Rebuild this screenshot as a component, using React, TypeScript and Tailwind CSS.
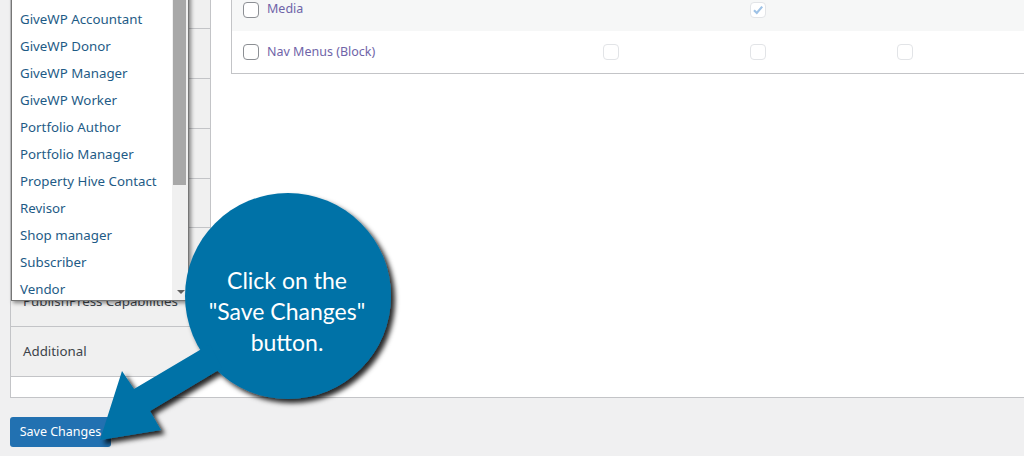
import React from "react";

const roles = [
  "Editor",
  "GiveWP Accountant",
  "GiveWP Donor",
  "GiveWP Manager",
  "GiveWP Worker",
  "Portfolio Author",
  "Portfolio Manager",
  "Property Hive Contact",
  "Revisor",
  "Shop manager",
  "Subscriber",
  "Vendor",
];

function Box({ checked = false, dark = false }: { checked?: boolean; dark?: boolean }) {
  return (
    <span
      className={
        "flex h-[16px] w-[16px] items-center justify-center rounded-[4px] border bg-white " +
        (dark ? "border-[#8c8f94]" : "border-[#e2e4e7]")
      }
    >
      {checked && (
        <svg width="12" height="12" viewBox="0 0 12 12">
          <path d="M2 6.2 L4.8 9 L10.2 2.6" fill="none" stroke="#9ec2e6" strokeWidth="2.2" />
        </svg>
      )}
    </span>
  );
}

export default function App() {
  return (
    <div
      className="relative h-[456px] w-[1024px] overflow-hidden bg-[#f0f0f1]"
      style={{ fontFamily: '"Noto Sans", "Open Sans", sans-serif' }}
    >
      {/* main panel */}
      <div className="ml-[10px] flex h-[398px] w-[1014px] border-b border-l border-[#c3c4c7] bg-white">
        {/* sidebar */}
        <div className="flex w-[200px] flex-col">
          <div className="flex flex-col border-r border-[#c3c4c7] bg-[#f0f0f0]">
            <div className="h-[29px] border-b border-[#c3c4c7]" />
            <div className="h-[50px] border-b border-[#c3c4c7]" />
            <div className="h-[50px] border-b border-[#c3c4c7]" />
            <div className="h-[50px] border-b border-[#c3c4c7]" />
            <div className="h-[49px] border-b border-[#c3c4c7]" />
            <div className="h-[49px] border-b border-[#c3c4c7]" />
            <div className="flex h-[50px] items-center border-b border-[#c3c4c7] pl-[12px] text-[13.3px] text-[#3c434a]">
              PublishPress Capabilities
            </div>
            <div className="flex h-[50px] items-center border-b border-[#c3c4c7] pl-[12px] text-[13.3px] text-[#3c434a]">
              Additional
            </div>
          </div>
        </div>
        {/* content */}
        <div className="flex-1 overflow-hidden pl-[20px]">
          <div className="mt-[-12px] w-[900px] border-b border-l border-[#c3c4c7]">
            <div className="flex h-[43px] items-center bg-[#f6f7f7]">
              <div className="flex w-[305px] items-center gap-[8px] pl-[11px]">
                <Box dark />
                <span className="text-[12.5px] text-[#6f64a8]">Media</span>
              </div>
              <div className="flex w-[147px] justify-center" />
              <div className="flex w-[147px] justify-center">
                <Box checked />
              </div>
              <div className="flex w-[147px] justify-center" />
            </div>
            <div className="flex h-[42px] items-center bg-white">
              <div className="flex w-[305px] items-center gap-[8px] pl-[11px]">
                <Box dark />
                <span className="text-[12.5px] text-[#6f64a8]">Nav Menus (Block)</span>
              </div>
              <div className="flex w-[147px] justify-center">
                <Box />
              </div>
              <div className="flex w-[147px] justify-center">
                <Box />
              </div>
              <div className="flex w-[147px] justify-center">
                <Box />
              </div>
            </div>
          </div>
        </div>
      </div>

      {/* save button */}
      <div className="ml-[10px] mt-[19px] flex h-[30px] w-[101px] items-center justify-center rounded-[3px] bg-[#2271b1] text-[12.5px] text-white">
        Save Changes
      </div>

      {/* dropdown list */}
      <div className="absolute left-[11px] top-[-22px] flex h-[323px] w-[178px] overflow-hidden border border-[#767676] bg-white shadow-[2px_2px_4px_rgba(0,0,0,0.45)]">
        <div className="flex flex-1 flex-col">
          {roles.map((r) => (
            <div key={r} className="flex h-[27px] shrink-0 items-center pl-[8px] text-[13.3px] text-[#1e5b86]">
              {r}
            </div>
          ))}
        </div>
        <div className="relative w-[16px] bg-[#f0f0f0]">
          <div className="ml-[1px] h-[206px] w-[13px] bg-[#a8a8a8]" />
          <div className="absolute bottom-[6px] left-[5px] h-0 w-0 border-l-[4px] border-r-[4px] border-t-[4px] border-l-transparent border-r-transparent border-t-[#606060]" />
        </div>
      </div>

      {/* callout */}
      <svg className="pointer-events-none absolute left-0 top-0" width="1024" height="456">
        <defs>
          <filter id="sh" x="-20%" y="-20%" width="140%" height="140%">
            <feDropShadow dx="4" dy="4" stdDeviation="2.5" floodColor="#000" floodOpacity="0.85" />
          </filter>
        </defs>
        <g filter="url(#sh)" fill="#0272a7">
          <circle cx="288" cy="296" r="103" />
          <polygon points="100,440 122,371 134,389 210,344 222,368 150,411 161,430" />
        </g>
      </svg>
      <div
        className="pointer-events-none absolute left-[187px] top-[265px] flex w-[200px] flex-col items-center text-[23px] leading-[31px] text-white"
        style={{ fontFamily: 'Lato, "Open Sans", sans-serif' }}
      >
        <span>Click on the</span>
        <span>"Save Changes"</span>
        <span>button.</span>
      </div>
    </div>
  );
}
